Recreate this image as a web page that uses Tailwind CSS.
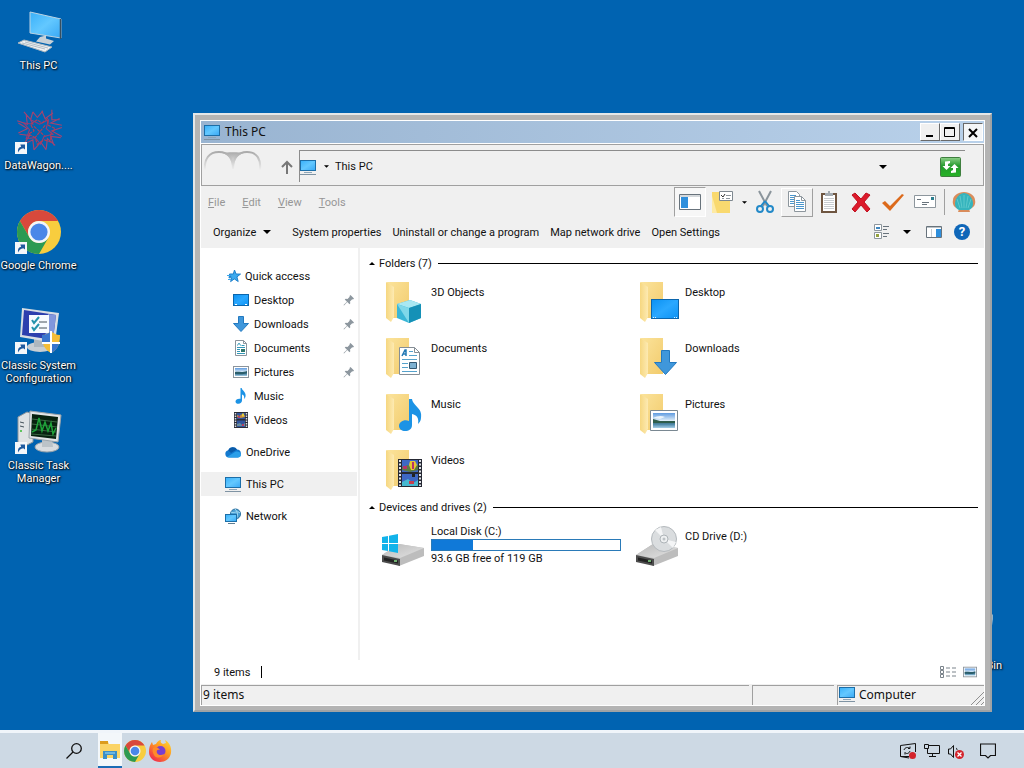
<!DOCTYPE html>
<html lang="en">
  <head>
    <meta charset="UTF-8" />
    <meta name="viewport" content="width=device-width, initial-scale=1.0" />
    <title>This PC</title>
    <script src="https://cdn.jsdelivr.net/npm/@tailwindcss/browser@4"></script>
  </head>
  <body class="font-[Roboto,sans-serif] text-[11px] leading-[13px] text-[#111]">
    <!-- Shared icons -->
    <svg class="absolute w-0 h-0" aria-hidden="true">
      <defs>
        <linearGradient id="screen" x1="0" y1="0" x2="1" y2="1">
          <stop offset="0" stop-color="#38b0fa" />
          <stop offset="0.5" stop-color="#63c8ff" />
          <stop offset="1" stop-color="#38a8f5" />
        </linearGradient>
        <linearGradient id="desk" x1="0" y1="0" x2="1" y2="1">
          <stop offset="0" stop-color="#0a91f2" />
          <stop offset="0.5" stop-color="#2aa8ff" />
          <stop offset="1" stop-color="#0c92f4" />
        </linearGradient>
        <linearGradient id="folderBack" x1="0" y1="0" x2="1" y2="1">
          <stop offset="0" stop-color="#fbe39b" />
          <stop offset="1" stop-color="#f2cb6c" />
        </linearGradient>
        <linearGradient id="folderFront" x1="0" y1="0" x2="1" y2="0">
          <stop offset="0" stop-color="#f6d780" />
          <stop offset="1" stop-color="#fdeab2" />
        </linearGradient>
        <linearGradient id="driveTop" x1="0" y1="0" x2="1" y2="1">
          <stop offset="0" stop-color="#b9b9b9" />
          <stop offset="1" stop-color="#e4e4e4" />
        </linearGradient>
        <linearGradient id="sky" x1="0" y1="0" x2="0" y2="1">
          <stop offset="0" stop-color="#5f9be0" />
          <stop offset="0.5" stop-color="#dcecf8" />
          <stop offset="0.55" stop-color="#3c6a70" />
          <stop offset="0.75" stop-color="#4b86a6" />
          <stop offset="1" stop-color="#a4cde6" />
        </linearGradient>
        <linearGradient id="arc" x1="0" y1="0" x2="0" y2="1">
          <stop offset="0" stop-color="#aaa" />
          <stop offset="1" stop-color="#f0f0f0" />
        </linearGradient>
        <linearGradient id="green" x1="0" y1="0" x2="0" y2="1">
          <stop offset="0" stop-color="#8fd08a" />
          <stop offset="0.45" stop-color="#249a2c" />
          <stop offset="1" stop-color="#27b327" />
        </linearGradient>
        <linearGradient id="fox" x1="1" y1="0" x2="0.2" y2="1">
          <stop offset="0" stop-color="#ffe03a" />
          <stop offset="0.45" stop-color="#ff9a1f" />
          <stop offset="1" stop-color="#f0254f" />
        </linearGradient>
      </defs>

      <symbol id="i-pc" viewBox="0 0 16 16">
        <rect x="0.5" y="1.5" width="15" height="10" fill="url(#screen)" stroke="#1c6ea8" />
        <path d="M4 13.5h8" stroke="#8ea6b8" />
        <path d="M0 15.5h16" stroke="#7f93a3" />
      </symbol>
      <symbol id="i-desktop" viewBox="0 0 16 16">
        <rect x="0.5" y="2.500" width="15" height="11" fill="url(#desk)" stroke="#0b66ad" />
        <path d="M2 12.500h2M12 12.500h2" stroke="#fff" />
      </symbol>
      <symbol id="i-down" viewBox="0 0 16 16">
        <path d="M5.500 0.500h5v7h5L8 15.500 0.500 7.500h5z" fill="#3f97db" stroke="#2379c0" />
      </symbol>
      <symbol id="i-doc" viewBox="0 0 16 16">
        <path d="M2.500 0.500h8l3 3v12h-11z" fill="#fff" stroke="#8b949c" />
        <path d="M10.500 0.500v3h3" fill="none" stroke="#8b949c" />
        <path d="M4.500 5.500l1-2h1l1 2M8.500 5.500h3M4 7.500h8M4 9.500h3M4 11.500h3M4 13.500h8" stroke="#3297b8" fill="none" />
        <path d="M8 9h4v3H8z" fill="#31776d" />
      </symbol>
      <symbol id="i-pic" viewBox="0 0 16 16">
        <rect x="0.5" y="2.500" width="15" height="11" fill="#fff" stroke="#8b949c" />
        <rect x="2" y="4" width="12" height="8" fill="url(#sky)" />
        <path d="M2 8c3-1 6 1 12-1v2c-5 2-8 1-12 1z" fill="#2b5e6b" />
      </symbol>
      <symbol id="i-music" viewBox="0 0 16 16">
        <path d="M7.500 0h1.200c.2 2.500 4.800 4 3.800 8.500-.2.900-.8 2-1.500 2.500.8-2.500-.3-4-2-4.600v6.200c0 1.800-1.600 3.200-3.500 3.200C3.800 15.800 2.500 15 2.500 13.400c0-1.700 2.300-3.100 5-2.600z" fill="#1c93e5" />
      </symbol>
      <symbol id="i-video" viewBox="0 0 16 16">
        <path d="M1 0h14v16H1z" fill="#2a2d38" />
        <path d="M2.500 1v14M13.500 1v14" stroke="#d8dbe2" stroke-width="1.500" stroke-dasharray="1.500 1" />
        <path d="M4 1h8v6H4zM4 8.500h8V15H4z" fill="#31549d" />
        <path d="M4 3l3 1 1-2 2 2 2-1v2l-4 1-4-1z" fill="#c98b3d" />
        <path d="M9 1.500h2v3H9z" fill="#e5cf3b" />
        <path d="M4 12l3-1 2 2 3-2v3H4z" fill="#698c9d" />
        <path d="M5 4h2v2H5zM9 12h2v2H9z" fill="#b33f64" />
      </symbol>
      <symbol id="i-star" viewBox="0 0 16 16">
        <path d="M8.500 2l1.500 4 4.500.1-3.600 2.800 1.300 4.600-3.900-2.600-3.700 2.700 1.200-3.800H3V8.600h2L3.500 7V6h3.800z" fill="#3ba9ee" stroke="#1c80cc" />
        <path d="M1 7.500h3M2 11.500h3" stroke="#3ba9ee" />
      </symbol>
      <symbol id="i-cloud" viewBox="0 0 16 16">
        <path d="M4 13.500a3.700 3.700 0 01-.8-7.300A5 5 0 0112 5.600a4 4 0 01.8 7.900z" fill="#1379cf" />
        <path d="M3.200 6.200A5 5 0 0112 5.600L6 9z" fill="#0a5aa8" />
        <path d="M2 13l8-5c3-1.200 6 .4 6 3 0 1.500-1.300 2.500-3 2.500H4c-.8 0-1.500-.2-2-.5z" fill="#2b9fe9" />
      </symbol>
      <symbol id="i-net" viewBox="0 0 16 16">
        <circle cx="10.500" cy="6" r="5" fill="#4a9fd4" stroke="#2a6f9e" />
        <path d="M6 4c3 2 6-2 9 1M10 1c3 3 3 7 1 10" stroke="#a7dcf3" fill="none" />
        <rect x="0.5" y="6.500" width="11" height="7" fill="url(#screen)" stroke="#1c6ea8" />
        <path d="M3 15.500h7" stroke="#5c7d93" />
      </symbol>
      <symbol id="i-pin" viewBox="0 0 12 12">
        <path d="M7.500 1L11 4.500l-1 1-.8-.2L7 7.500l.3 1.800-.8 1L4.300 8 1 11.500.5 11 4 7.700 1.700 5.500l1-.8 1.800.3 2.200-2.200L6.500 2z" fill="#8d979f" />
      </symbol>
      <symbol id="i-caret" viewBox="0 0 8 4">
        <path d="M0 0h8L4 4z" fill="#000" />
      </symbol>
      <symbol id="i-up" viewBox="0 0 6 3">
        <path d="M0 3h6L3 0z" fill="#000" />
      </symbol>
      <symbol id="i-folder" viewBox="0 0 44 44">
        <path d="M5 2h22v36H8z" fill="url(#folderBack)" />
        <path d="M4 2l8 5v30l-3 5-5-4z" fill="url(#folderFront)" />
      </symbol>
      <symbol id="i-shortcut" viewBox="0 0 12 12">
        <rect width="12" height="12" fill="#f4f7fa" />
        <path d="M3 10.500C2.500 7 4 5 6.200 4.800L5.300 2.500H10v5L8.300 6.300C5.500 6.500 4.500 8 3 10.500z" fill="#1f5a9e" />
      </symbol>
      <symbol id="i-chrome" viewBox="0 0 48 48">
        <circle cx="24" cy="24" r="22" fill="#f8cd3e" />
        <path d="M4.950 13A22 22 0 0143.050 13H24a11 11 0 00-9.500 16.500z" fill="#d8493c" />
        <path d="M4.950 13A22 22 0 0024 46l9.500-16.500A11 11 0 0114.500 29.500z" fill="#2c9a53" />
        <circle cx="24" cy="24" r="11" fill="#f4f6f8" />
        <circle cx="24" cy="24" r="8.600" fill="#4a87e8" />
      </symbol>
      <symbol id="i-drive" viewBox="0 0 44 24">
        <path d="M1 12L18 1l25 4v8L18 23z" fill="#bdbdbd" />
        <path d="M1 12L18 1l25 4-24 10z" fill="url(#driveTop)" />
        <path d="M1 12l18 4v7L1 19z" fill="#4c4c4c" />
        <path d="M3 14.500l14 3v3l-14-3z" fill="#222" />
        <path d="M13 18h3" stroke="#8be08b" stroke-width="1.500" />
      </symbol>
    </svg>

    <div class="flex flex-col h-screen overflow-hidden bg-[#0063b1]">
      <main class="relative flex-1">
        <!-- Desktop shortcuts -->
        <div class="flex flex-col w-[77px] text-white text-center [text-shadow:1px_1px_2px_#000,0_0_2px_#000]">
          <a href="#" class="flex flex-col items-center gap-[3px] h-[100px] pt-2">
            <svg class="size-12" viewBox="0 0 48 48">
              <path d="M15 4l31 7v19l-31-5z" fill="url(#screen)" stroke="#bcd3e2" />
              <path d="M45.500 11v20" stroke="#374f60" stroke-width="1.500" />
              <path d="M25 29l6-1.500v3l8 2.500-4 3.500-14-3z" fill="#c7d1d8" />
              <path d="M3 35l6-3 28 7-7 5z" fill="#eef1f3" stroke="#a9b5be" />
              <path d="M7 35l23 6M10 34l23 6" stroke="#b4bec6" />
            </svg>
            <span>This PC</span>
          </a>
          <a href="#" class="relative flex flex-col items-center gap-[3px] h-[100px] pt-2">
            <svg class="size-12" viewBox="2 6 43 40" fill="none" stroke="#a5436f">
              <path d="M18 8l4 5 5-6M26 7l3 7 7-5M35 6v9h7M42 14l-8 4 10 2M44 22l-9 3 9 5M43 31l-9-1 3 8M38 38l-7-6-1 9M30 42l-5-7-6 7M19 42l-1-9-8 4M10 37l5-8-9-1M5 27l8-4-8-5M4 16l9 3-1-9M10 8l6 7 2-7" />
              <path d="M16 15l8 4 8-4-2 8 6 5-8 2-3 7-5-6-8 1 3-8-5-6 8 1z" stroke="#983c75" />
              <path d="M22 15l-6 4 3 6-5 3 6 3 2 6 6-4 6 2 0-7 4-5-6-3-1-6-5 4zM19 21l10 9M29 20l-9 11" stroke="#b43c55" stroke-dasharray="3 1" />
            </svg>
            <svg class="absolute left-[15px] top-[42px] size-3"><use href="#i-shortcut" /></svg>
            <span>DataWagon....</span>
          </a>
          <a href="#" class="relative flex flex-col items-center gap-[3px] h-[100px] pt-2">
            <svg class="size-12"><use href="#i-chrome" /></svg>
            <svg class="absolute left-[15px] top-[42px] size-3"><use href="#i-shortcut" /></svg>
            <span class="whitespace-nowrap">Google Chrome</span>
          </a>
          <a href="#" class="relative flex flex-col items-center gap-[3px] h-[100px] pt-2">
            <svg class="size-12" viewBox="0 0 48 48">
              <ellipse cx="25" cy="39" rx="13" ry="5" fill="#c9ced2" />
              <path d="M19 30h12l2 9H19z" fill="#aeb7be" />
              <path d="M7 0l37 5-4 30-35-6z" fill="#d8dee4" />
              <path d="M9 2l32 5-3 25-31-5z" fill="#2c3fae" />
              <path d="M33 6l8 1-3 25-8-2z" fill="#8197dc" />
              <path d="M14 7h20v18H14z" fill="#f7fbff" />
              <path d="M17 12l2 3 5-6M17 19l2 3 5-6" fill="none" stroke="#2493ac" stroke-width="2" />
              <path d="M24 14h8M24 20h8" stroke="#44515a" />
              <path d="M27 27c4 0 7-2 9-4 2 2 5 4 9 4 0 10-3 15-9 18-6-3-9-8-9-18z" fill="#f5bd37" />
              <path d="M36 23c-2 2-5 4-9 4v8h9zM36 35h8c-1 5-4 8-8 10z" fill="#3975ce" />
              <path d="M36 23v22M27 35h18" stroke="#fff" stroke-width="2" />
            </svg>
            <svg class="absolute left-[15px] top-[42px] size-3"><use href="#i-shortcut" /></svg>
            <span>Classic System Configuration</span>
          </a>
          <a href="#" class="relative flex flex-col items-center gap-[3px] h-[100px] pt-2">
            <svg class="size-12" viewBox="0 0 48 48">
              <path d="M3 9l9-5 6 2v28l-8 4-7-3z" fill="#dfe2e4" stroke="#8d969d" />
              <path d="M5 14l4 1M5 18l4 1" stroke="#44515a" />
              <path d="M5 22h2v2H5z" fill="#5fc45f" />
              <ellipse cx="32" cy="39" rx="12" ry="5" fill="#d9dcdf" stroke="#9aa3aa" />
              <path d="M27 31h10l1 8H27z" fill="#bcc3c8" />
              <path d="M15 3l31 4-3 27-29-4z" fill="#e3e5e6" stroke="#9aa3aa" />
              <path d="M17 6l26 3-2 22-25-3z" fill="#07210f" />
              <path d="M17 11l25 3M17 16l25 3M16 21l25 3M16 26l25 2" stroke="#3a6743" />
              <path d="M17 24l4-2 3-12 3 13 3-9 3 9 3-8 2 11 3-6" fill="none" stroke="#1ea43a" stroke-width="1.500" />
            </svg>
            <svg class="absolute left-[15px] top-[42px] size-3"><use href="#i-shortcut" /></svg>
            <span class="w-[66px]">Classic Task Manager</span>
          </a>
        </div>
        <a href="#" class="absolute right-[22px] bottom-[58px] flex flex-col items-center gap-[3px] text-white whitespace-nowrap [text-shadow:1px_1px_2px_#000,0_0_2px_#000]">
          <svg class="size-12" viewBox="0 0 48 48">
            <path d="M8 6h34l1 1v4l-5 33H13z" fill="#8fb3cc" />
          </svg>
          <span>Recycle Bin</span>
        </a>

        <!-- Explorer window -->
        <section class="absolute left-[193px] right-[32px] top-[113px] bottom-[18px] flex flex-col border-2 border-t-[#e3e6e8] border-l-[#e3e6e8] border-r-[#9fa3a5] border-b-[#9fa3a5] bg-[#b4b4b4] p-[5px] pb-[4px]">
          <div class="flex flex-col flex-1 min-h-0 border border-white bg-[#f0f0f0]">
            <header class="flex items-center h-[23px] pl-[3px] pr-[1px] bg-linear-to-r from-[#99b4d1] to-[#b9d1ea] border-b border-white">
              <svg class="size-4"><use href="#i-pc" /></svg>
              <h1 class="ml-[5px] flex-1 font-[Noto_Sans,sans-serif] text-xs leading-4">This PC</h1>
              <button aria-label="Minimize" class="w-5 h-[18px] bg-[#f0f0f0] border border-t-white border-l-white border-r-[#696969] border-b-[#696969]">
                <svg class="w-full h-full" viewBox="0 0 18 16"><path d="M5 12h7" stroke="#000" stroke-width="2" /></svg>
              </button>
              <button aria-label="Maximize" class="w-5 h-[18px] bg-[#f0f0f0] border border-t-white border-l-white border-r-[#696969] border-b-[#696969]">
                <svg class="w-full h-full" viewBox="0 0 18 16" fill="none" stroke="#000"><path d="M3.500 3.500h10v9h-10zM3 4.500h11" /></svg>
              </button>
              <button aria-label="Close" class="ml-[3px] w-5 h-[18px] bg-[#f4f6f8] border border-t-[#696969] border-l-[#696969] border-r-white border-b-white">
                <svg class="w-full h-full" viewBox="0 0 18 16"><path d="M5 5l8 8M13 5l-8 8" stroke="#000" stroke-width="2" /></svg>
              </button>
            </header>

            <!-- Address row -->
            <nav class="flex h-[42px] border border-[#a0a0a0] pl-[2px] pr-[18px]">
              <svg class="w-[58px] h-6 mt-[5px]" viewBox="0 0 58 24" fill="none">
                <path d="M18 3c5-1 17-1 22 0-7 2-9 6-10 13h-2c-1-7-3-11-10-13z" fill="url(#arc)" />
                <path d="M1 20C0 9 5 2 15 2s14 7 14 17C29 9 33 2 43 2s14 7 13 18" stroke="url(#arc)" stroke-width="2" />
              </svg>
              <button aria-label="Up" class="ml-[17px] mr-1 mt-[14px] w-4 h-4">
                <svg class="size-4" viewBox="0 0 16 16" fill="none" stroke="#777" stroke-width="2"><path d="M8 15V4M3 8l5-5 5 5" /></svg>
              </button>
              <div class="flex flex-1 items-center mt-[5px] mb-[3px] border-t border-l border-[#8c8c8c]">
                <svg class="size-4"><use href="#i-pc" /></svg>
                <svg class="ml-[8px] w-[5px] h-[3px]"><use href="#i-caret" /></svg>
                <button class="ml-[6px]">This PC</button>
                <button aria-label="Previous locations" class="ml-auto mr-[53px]">
                  <svg class="w-2 h-1"><use href="#i-caret" /></svg>
                </button>
                <button aria-label="Refresh" class="mr-1">
                  <svg class="w-[21px] h-5" viewBox="0 0 21 20">
                    <rect x="0.5" y="0.5" width="20" height="19" rx="1" fill="url(#green)" stroke="#3f7f3f" />
                    <path d="M10 4L5 4.500V9H2.500L6.500 13l4-4H8V7l2-1zM11 16l5-.5V11h2.500L14.500 7l-4 4H13v2l-2 1z" fill="#fff" />
                  </svg>
                </button>
              </div>
            </nav>

            <!-- Menu and large buttons -->
            <div class="flex items-center h-8 pl-[7px] pr-1 text-[#969696]">
              <div class="flex gap-[17px]">
                <button><u>F</u>ile</button>
                <button><u>E</u>dit</button>
                <button><u>V</u>iew</button>
                <button><u>T</u>ools</button>
              </div>
              <div class="flex items-center ml-auto h-[30px]">
                <button aria-label="Navigation pane" class="flex items-center justify-center w-8 h-full border border-t-[#a0a0a0] border-l-[#a0a0a0] border-r-white border-b-white bg-[#f7f7f7]">
                  <svg class="w-6 h-6" viewBox="0 0 24 24"><path d="M1.500 4.500h21v15h-21z" fill="#fff" stroke="#68737c" /><path d="M2 5h20v2H2z" fill="#d5d9dc" /><path d="M3 7h7v11H3z" fill="#2f8fdc" /></svg>
                </button>
                <button aria-label="Folder options" class="flex items-center gap-[7px] w-[43px] pl-[5px]">
                  <svg class="w-6 h-6 shrink-0" viewBox="0 0 24 24"><path d="M1 2h7l2 3h9v18H1z" fill="#f9d96f" /><path d="M1 6l5 17H1z" fill="#fdeaa5" /><path d="M8.500 1.500h13v9h-13z" fill="#fff" stroke="#7e8890" /><path d="M10 5l2 2 2-3" fill="none" stroke="#333" /><path d="M15 5.500h5M11 8.500h2M15 8.500h4" stroke="#8d969d" /></svg>
                  <svg class="w-[5px] h-[3px] shrink-0"><use href="#i-caret" /></svg>
                </button>
                <button aria-label="Cut" class="flex justify-center w-8">
                  <svg class="w-5 h-6" viewBox="0 0 20 24" fill="none"><path d="M4 1l8 15M16 1L8 16" stroke="#8a949b" stroke-width="2" /><path d="M10 11l4 5M10 11l-4 5" stroke="#2389c8" stroke-width="2" /><circle cx="5" cy="19" r="3" stroke="#2389c8" stroke-width="2" /><circle cx="15" cy="19" r="3" stroke="#2389c8" stroke-width="2" /></svg>
                </button>
                <button aria-label="Copy" class="flex items-center justify-center w-8 h-[29px] border border-t-white border-l-white border-r-[#a0a0a0] border-b-[#a0a0a0]">
                  <svg class="w-5 h-6" viewBox="0 0 20 24"><path d="M1.500 1.500h8l3 3v12h-11z" fill="#fff" stroke="#8d969d" /><path d="M3 5.500h6M3 7.500h6M3 9.500h5M3 11.500h5M3 13.500h5" stroke="#4b96cc" /><path d="M7.500 6.500h7l4 4v11h-11z" fill="#fff" stroke="#8d969d" /><path d="M14.500 6.500v4h4" fill="none" stroke="#8d969d" /><path d="M9 10.500h4M9 12.500h8M9 14.500h8M9 16.500h8M9 18.500h8" stroke="#4b96cc" /></svg>
                </button>
                <button aria-label="Paste" class="flex justify-center w-8">
                  <svg class="w-5 h-6" viewBox="0 0 20 24"><path d="M2 3h16v20H2z" fill="#6f5641" /><path d="M4 5h12v16H4z" fill="#fff" /><path d="M6 6V3h3V1h2v2h3v3z" fill="#a4abb1" /><path d="M5 8.500h10M5 10.500h10M5 12.500h10M5 14.500h10M5 16.500h10M5 18.500h10" stroke="#c9cdd1" /></svg>
                </button>
                <button aria-label="Delete" class="flex justify-center w-8">
                  <svg class="w-5 h-6" viewBox="0 0 20 24"><path d="M1 5l3-2 6 6 5-6 4 2-6 7 6 7-3 3-6-7-6 7-3-3 6-7z" fill="#dc1a2b" stroke="#c01020" /></svg>
                </button>
                <button aria-label="Properties" class="flex justify-center w-8">
                  <svg class="w-6 h-6" viewBox="0 0 24 24"><path d="M1 13l3-2 5 5L21 4l2 1L9 21z" fill="#dc6a1c" /></svg>
                </button>
                <button aria-label="E-mail" class="flex justify-center w-8">
                  <svg class="w-6 h-6" viewBox="0 0 24 24"><path d="M1.500 5.500h21v12h-21z" fill="#fff" stroke="#8d969d" /><path d="M4 9.500h4M9 12.500h7M9 14.500h5" stroke="#68737c" /><path d="M18 7h3v3h-3z" fill="#2b7f8f" /></svg>
                </button>
                <div class="w-px h-[26px] mx-[3px] bg-[#a0a0a0]"></div>
                <button aria-label="Classic Shell settings" class="flex justify-center w-8">
                  <svg class="w-6 h-6" viewBox="0 0 24 24"><path d="M6 22l1-3C2 18 0 14 1 10c0-4 5-8 11-8s11 4 11 8c1 4-1 8-6 9l1 3z" fill="#d98c5b" /><path d="M7 20C3 18 2 14 4 9c2-4 5-6 8-6s6 2 8 6c2 5 1 9-3 11z" fill="#35b4bd" /><path d="M12 18V5M10 18L8 6M14 18l2-12M8 18L5 9M16 18l3-9" stroke="#5cc9cc" /></svg>
                </button>
              </div>
            </div>

            <!-- Command row -->
            <div class="flex items-center h-[30px] pl-3 pr-[14px] pb-[2px] whitespace-nowrap">
              <button class="flex items-center gap-[7px] mr-[21px]">
                Organize
                <svg class="w-2 h-1"><use href="#i-caret" /></svg>
              </button>
              <div class="flex gap-[11px]">
                <button>System properties</button>
                <button>Uninstall or change a program</button>
                <button>Map network drive</button>
                <button>Open Settings</button>
              </div>
              <div class="flex items-center ml-auto">
                <button aria-label="Change view" class="flex items-center gap-[13px] mr-[15px]">
                  <svg class="size-4" viewBox="0 0 16 16"><path d="M.5 .5h7v6h-7zM.5 8.500h7v6h-7z" fill="#fff" stroke="#8d969d" /><path d="M2 3h4v2H2z" fill="#3f87c0" /><path d="M2 10h3v3H2z" fill="#94a23e" /><path d="M9 2.500h6M9 5.500h4M9 9.500h6M9 12.500h4" stroke="#68737c" /></svg>
                  <svg class="w-2 h-1"><use href="#i-caret" /></svg>
                </button>
                <button aria-label="Preview pane" class="mr-3">
                  <svg class="size-4" viewBox="0 0 16 16"><path d="M.5 2.500h15v11H.5z" fill="#fff" stroke="#68737c" /><path d="M1 3h14v1H1z" fill="#b9c1c7" /><path d="M10 5h5v8h-5z" fill="#2f8fdc" /><path d="M5.500 5v8" stroke="#c6ccd1" /></svg>
                </button>
                <button aria-label="Help" class="size-4 rounded-full bg-[#0f66b8] text-white text-[13px] leading-4 font-bold">?</button>
              </div>
            </div>

            <!-- Panes -->
            <div class="flex flex-1 min-h-0 bg-white">
              <aside class="w-[159px] shrink-0 border-r-2 border-[#f0f0f0] pt-4 pr-[1px]">
                <ul class="flex flex-col gap-2">
                  <li>
                    <a href="#" class="flex items-center gap-[3px] h-6 pl-[25px]"><svg class="size-4"><use href="#i-star" /></svg>Quick access</a>
                    <ul>
                      <li><a href="#" class="flex items-center gap-[5px] h-6 pl-8 pr-[2px]"><svg class="size-4"><use href="#i-desktop" /></svg><span class="flex-1">Desktop</span><svg class="size-3"><use href="#i-pin" /></svg></a></li>
                      <li><a href="#" class="flex items-center gap-[5px] h-6 pl-8 pr-[2px]"><svg class="size-4"><use href="#i-down" /></svg><span class="flex-1">Downloads</span><svg class="size-3"><use href="#i-pin" /></svg></a></li>
                      <li><a href="#" class="flex items-center gap-[5px] h-6 pl-8 pr-[2px]"><svg class="size-4"><use href="#i-doc" /></svg><span class="flex-1">Documents</span><svg class="size-3"><use href="#i-pin" /></svg></a></li>
                      <li><a href="#" class="flex items-center gap-[5px] h-6 pl-8 pr-[2px]"><svg class="size-4"><use href="#i-pic" /></svg><span class="flex-1">Pictures</span><svg class="size-3"><use href="#i-pin" /></svg></a></li>
                      <li><a href="#" class="flex items-center gap-[5px] h-6 pl-8"><svg class="size-4"><use href="#i-music" /></svg>Music</a></li>
                      <li><a href="#" class="flex items-center gap-[5px] h-6 pl-8"><svg class="size-4"><use href="#i-video" /></svg>Videos</a></li>
                    </ul>
                  </li>
                  <li><a href="#" class="flex items-center gap-[5px] h-6 pl-6"><svg class="size-4"><use href="#i-cloud" /></svg>OneDrive</a></li>
                  <li><a href="#" class="flex items-center gap-[5px] h-6 pl-6 bg-[#f0f0f0]"><svg class="size-4"><use href="#i-pc" /></svg>This PC</a></li>
                  <li><a href="#" class="flex items-center gap-[5px] h-6 pl-6"><svg class="size-4"><use href="#i-net" /></svg>Network</a></li>
                </ul>
              </aside>

              <div class="flex-1 pl-[9px] pr-[6px] pt-2">
                <h2 class="flex items-center h-[14px]">
                  <svg class="w-[6px] h-[3px] mr-1"><use href="#i-up" /></svg>
                  Folders (7)
                  <span class="flex-1 h-px ml-[6px] bg-black"></span>
                </h2>
                <ul class="grid grid-cols-[repeat(auto-fill,254px)] auto-rows-[56px] pl-[13px] pt-[10px]">
                  <li class="flex gap-[5px]">
                    <svg class="size-[44px]" viewBox="0 0 44 44"><use href="#i-folder" width="44" height="44" /><path d="M15 24l13-4 11 4v14l-12 5-12-5z" fill="#39b6d6" /><path d="M15 24l13-4 11 4-12 4z" fill="#a9e8f2" /><path d="M27 28l12-4v14l-12 5z" fill="#1591b7" /><path d="M15 24l12 4v15z" fill="#7fd8e9" /></svg>
                    <span class="pt-[6px]">3D Objects</span>
                  </li>
                  <li class="flex gap-[5px]">
                    <svg class="size-[44px]" viewBox="0 0 44 44"><use href="#i-folder" width="44" height="44" /><rect x="15.500" y="19.500" width="27" height="19" fill="url(#desk)" stroke="#0b66ad" /><path d="M17 37.500h4M38 37.500h4" stroke="#d9f0ff" stroke-dasharray="1 1" /></svg>
                    <span class="pt-[6px]">Desktop</span>
                  </li>
                  <li class="flex gap-[5px]">
                    <svg class="size-[44px]" viewBox="0 0 44 44"><use href="#i-folder" width="44" height="44" /><path d="M17.500 11.500h15l5 5v22h-20z" fill="#fff" stroke="#858e96" /><path d="M32.500 11.500v5h5" fill="none" stroke="#858e96" /><path d="M20 20l3-6h1v6M21 18h3" fill="none" stroke="#2279b5" stroke-width="1.500" /><path d="M27 15.500h4M27 19.500h8M20 23.500h15M20 27.500h6M20 31.500h6M20 35.500h15" stroke="#55a2cc" /><path d="M27.500 26.500h7v6h-7z" fill="#7eb1d1" stroke="#345771" /></svg>
                    <span class="pt-[6px]">Documents</span>
                  </li>
                  <li class="flex gap-[5px]">
                    <svg class="size-[44px]" viewBox="0 0 44 44"><use href="#i-folder" width="44" height="44" /><path d="M25.500 14.500h8v12h7L29.500 38.500 18.500 26.500h7z" fill="#3f97db" stroke="#2379c0" /></svg>
                    <span class="pt-[6px]">Downloads</span>
                  </li>
                  <li class="flex gap-[5px]">
                    <svg class="size-[44px]" viewBox="0 0 44 44"><use href="#i-folder" width="44" height="44" /><path d="M27 7h3c1 7 11 9 9 19 0 3-2 5-3 6 1-6-1-9-6-10v11c0 4-3 6-7 6-3 0-6-2-6-5 0-4 5-7 10-5z" fill="#1c93e5" /></svg>
                    <span class="pt-[6px]">Music</span>
                  </li>
                  <li class="flex gap-[5px]">
                    <svg class="size-[44px]" viewBox="0 0 44 44"><use href="#i-folder" width="44" height="44" /><path d="M14.500 18.500h27v20h-27z" fill="#fff" stroke="#7a8892" /><path d="M17 21h22v15H17z" fill="url(#sky)" /><path d="M17 27l7 2h15v2H17z" fill="#2e5d4b" /><path d="M17 26c4-2 8-3 12-1l-5 2z" fill="#e9f3fa" /></svg>
                    <span class="pt-[6px]">Pictures</span>
                  </li>
                  <li class="flex gap-[5px]">
                    <svg class="size-[44px]" viewBox="0 0 44 44"><use href="#i-folder" width="44" height="44" /><path d="M16 11h24v28H16z" fill="#252833" /><path d="M18 12v26M38 12v26" stroke="#dfe2e8" stroke-width="2" stroke-dasharray="2 1.500" /><path d="M20 12h16v12H20zM20 26h16v12H20z" fill="#3e68c4" /><path d="M20 19l6-2 3 2 7-2v5l-8 2-8-2z" fill="#5c7b43" /><path d="M28 13h5l2 4-3 5h-3l-2-5z" fill="#e8c731" /><path d="M21 18h4v3h-4zM30 14h2v7h-2z" fill="#b7346a" /><path d="M20 34l6-3 5 4 5-3v6H20z" fill="#46b8d0" /><path d="M27 33h5v3h-5z" fill="#c63f4f" /><path d="M30 26h3v3h-3z" fill="#222" /></svg>
                    <span class="pt-[6px]">Videos</span>
                  </li>
                </ul>
                <h2 class="flex items-center h-[14px] mt-[-4px]">
                  <svg class="w-[6px] h-[3px] mr-1"><use href="#i-up" /></svg>
                  Devices and drives (2)
                  <span class="flex-1 h-px ml-[6px] bg-black"></span>
                </h2>
                <ul class="grid grid-cols-[repeat(auto-fill,254px)] pl-3 pt-[11px]">
                  <li class="flex gap-[6px]">
                    <svg class="w-[44px] h-[44px]" viewBox="0 0 44 44"><use href="#i-drive" y="18" width="44" height="24" /><path d="M1 12l6-1v7H1zM8 10.800L17 9v9H8zM1 19h6v7l-6-1zM8 19h9v9l-9-1.800z" fill="#12b3ea" /></svg>
                    <div>
                      <p>Local Disk (C:)</p>
                      <div class="w-[190px] h-3 mt-[1px] mb-[1px] border border-[#2a7ab8] bg-white">
                        <div class="h-full bg-[#1079d8]" style="width: 22%"></div>
                      </div>
                      <p>93.6 GB free of 119 GB</p>
                    </div>
                  </li>
                  <li class="flex gap-[6px]">
                    <svg class="w-[44px] h-[44px]" viewBox="0 0 44 44"><use href="#i-drive" y="18" width="44" height="24" /><circle cx="29" cy="14" r="12.500" fill="#dadddf" stroke="#b4b9bd" /><path d="M29 14L20 5l6-3zM29 14l9 9 3-6z" fill="#f4f5f6" /><circle cx="29" cy="14" r="4" fill="#eef0f1" stroke="#aeb4b8" /><circle cx="29" cy="14" r="1.500" fill="#bcc1c5" /></svg>
                    <span class="pt-[5px]">CD Drive (D:)</span>
                  </li>
                </ul>
              </div>
            </div>
            <div class="flex items-center h-6 pl-[13px] pr-[7px] bg-white">
              <span>9 items</span>
              <span class="w-px h-3 ml-[11px] bg-black"></span>
              <button aria-label="Details" class="ml-auto">
                <svg class="size-4" viewBox="0 0 16 16" fill="none" stroke="#7a838b"><path d="M.5 2.500h3v3h-3zM.5 6.500h3v3h-3zM.5 10.500h3v3h-3z" /><path d="M6 4h4M12 4h4M6 8h4M12 8h4M6 12h4M12 12h4" /></svg>
              </button>
              <button aria-label="Large icons" class="ml-[7px]">
                <svg class="size-[14px]"><use href="#i-pic" /></svg>
              </button>
            </div>

            <!-- Status bar -->
            <footer class="flex gap-[3px] h-[21px] pt-[1px] font-[Noto_Sans,sans-serif] text-xs leading-[18px]">
              <div class="flex-1 border-t border-l border-[#a0a0a0] pl-[1px]">9 items</div>
              <div class="w-[82px] border-t border-l border-[#a0a0a0]"></div>
              <div class="flex w-[147px] border-t border-l border-[#a0a0a0] pl-[1px]">
                <svg class="size-4"><use href="#i-pc" /></svg>
                <span class="ml-1">Computer</span>
                <svg class="size-[14px] ml-auto mt-[5px]" viewBox="0 0 14 14" stroke="#8f8f8f"><path d="M1 14L14 1M6 14l8-8M11 14l3-3" /></svg>
              </div>
            </footer>
          </div>
        </section>
      </main>

      <!-- Taskbar -->
      <footer class="flex items-stretch h-[38px] shrink-0 border-t-3 border-[#f0f5fa] bg-[#cdd9e4] pl-[62px] pr-7">
        <button aria-label="Search" class="w-6 mr-3 flex items-center justify-center">
          <svg class="size-4" viewBox="0 0 16 16" fill="none" stroke="#111" stroke-width="1.300"><circle cx="10.500" cy="5.500" r="4.800" /><path d="M7 9l-6.500 6.500" /></svg>
        </button>
        <button aria-label="File Explorer" class="w-6 mr-px flex items-center justify-center bg-[#f3f7fa] border-b-2 border-[#1a6cb5]">
          <svg class="w-[22px] h-5" viewBox="0 0 22 20"><path d="M1 2h8l1 2h11v14H1z" fill="#fbd466" /><path d="M1 1h8v3H1z" fill="#dc9c1c" /><path d="M4 19v-8h14v8h-4v-4H8v4z" fill="#3b8fc9" /><path d="M6 13h10" stroke="#7fc3ea" stroke-width="1.500" /></svg>
        </button>
        <button aria-label="Chrome" class="w-6 flex items-center justify-center"><svg class="w-6 h-6"><use href="#i-chrome" /></svg></button>
        <button aria-label="Firefox" class="w-[26px] flex items-center justify-center">
          <svg class="w-[24px] h-[24px]" viewBox="0 0 24 24"><path d="M1 13C1 8 2 6 4 3l1 3 3-1c1-2 3-4 5-4-1 2 0 3 2 4l3-1-1-3c4 2 7 7 6 13-1 6-6 9-11 9C6 23 1 19 1 13z" fill="url(#fox)" /><circle cx="12.500" cy="12" r="5" fill="#7a3fd0" /><path d="M5 9c3-2 6 0 7 2-2-1-4 0-3 3 1 2 4 3 7 1-1 4-8 5-10 1-1-2-2-4-1-7z" fill="#ff8a2a" /></svg>
        </button>
        <div class="flex items-center gap-2 ml-auto">
          <button aria-label="Restart required">
            <svg class="size-4" viewBox="0 0 16 16" fill="none" stroke="#111"><path d="M9 13.500H.5v-11l15-2V9M.5 13.500L9 15" /><path d="M4 7c1-3 4-3 6-1.500V3.500M10 5.500H8M10 8c-1 3-4 3-5 1.500v2" /><circle cx="12.500" cy="12.500" r="3.500" fill="#d3242c" stroke="none" /></svg>
          </button>
          <button aria-label="Network">
            <svg class="size-4" viewBox="0 0 16 16" fill="none" stroke="#111"><path d="M5 2.500h10.500v8H3.500V6M.5 1.500h4v4h-4zM8.500 10.500v3M5 13.500h7" /></svg>
          </button>
          <button aria-label="Volume muted">
            <svg class="size-4" viewBox="0 0 16 16" fill="none" stroke="#111"><path d="M5.500 2.500v12L2.500 11H.5V6h2l3-3.500zM8 5c1 .5 1 1.500 1 2" /><circle cx="11.500" cy="11.500" r="4.500" fill="#d3242c" stroke="none" /><path d="M9.500 9.500l4 4M13.500 9.500l-4 4" stroke="#fff" stroke-width="1.300" /></svg>
          </button>
          <button aria-label="Notifications" class="ml-2">
            <svg class="size-4" viewBox="0 0 16 16" fill="none" stroke="#111" stroke-width="1.200"><path d="M.5 1h15v11.500h-5L8 15l-2.500-2.500h-5z" /></svg>
          </button>
        </div>
      </footer>
    </div>
  </body>
</html>
